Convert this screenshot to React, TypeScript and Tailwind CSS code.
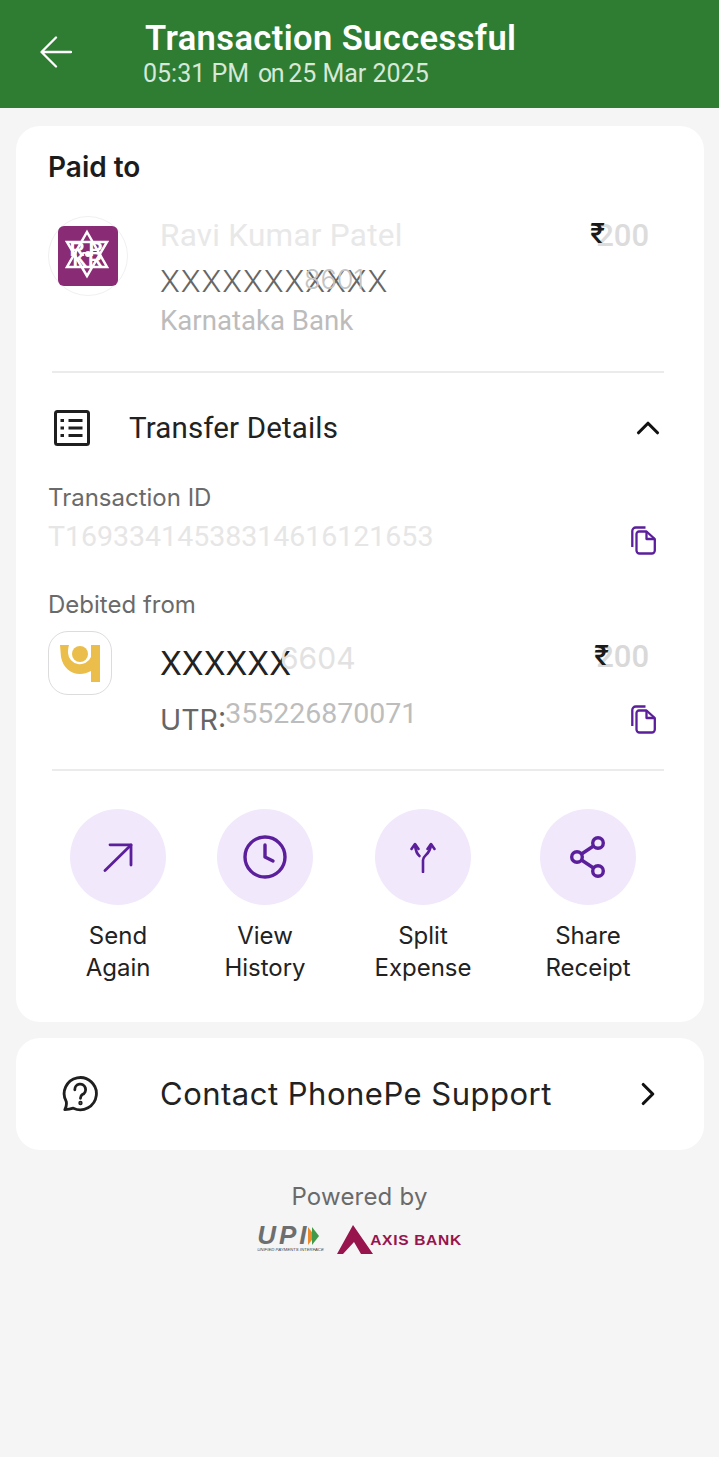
import React from 'react';
import { ChevronRight, ChevronUp, Clock } from 'lucide-react';

const inter = "font-['Inter',sans-serif]";
const roboto = "font-['Roboto',sans-serif]";

const CopyIcon = () => (
  <svg width="25" height="29" viewBox="0 0 25 29" fill="none" stroke="#5b1f9b" strokeWidth="2.300" strokeLinejoin="round">
    <path d="M5.500 8 A2.500 2.500 0 0 1 8 5.500 H15.500 L23.800 13 V24.500 A3 3 0 0 1 20.800 27.500 H8.500 A3 3 0 0 1 5.500 24.500 Z" />
    <path d="M15.500 5.500 V13 H23.800" />
    <path d="M1.300 21 V5 A3.500 3.500 0 0 1 4.800 1.500 H14.500" />
  </svg>
);

const ListIcon = () => (
  <svg width="36" height="36" viewBox="0 0 36 36" fill="none" stroke="#1f1f1f" strokeWidth="3">
    <rect x="1.500" y="1.500" width="33" height="33" rx="2" />
    <path d="M14.500 10.500 H28.500 M14.500 18 H28.500 M14.500 25.500 H28.500" />
    <path d="M6.500 10.500 H10 M6.500 18 H10 M6.500 25.500 H10" />
  </svg>
);

const ArrowIcon = () => (
  <svg width="30" height="29" viewBox="0 0 30 29" fill="none" stroke="#5b1f9b" strokeWidth="2.800" strokeLinecap="round" strokeLinejoin="round">
    <path d="M2 27.500 L28 2" />
    <path d="M7 1.800 H28 V22" />
  </svg>
);

const SplitIcon = () => (
  <svg width="26" height="31" viewBox="0 0 26 31" fill="none" stroke="#5b1f9b" strokeWidth="2.600" strokeLinecap="round" strokeLinejoin="round">
    <path d="M13 30 V18 C13 13 20 13 21 3" />
    <path d="M9.500 14 C7 12 5.500 8 5 3" />
    <path d="M1.500 7 L5 2 L8.500 7" />
    <path d="M17.500 7 L21 2 L24.500 7" />
  </svg>
);

const ShareIcon = () => (
  <svg width="36" height="42" viewBox="0 0 36 42" fill="none" stroke="#5b1f9b" strokeWidth="3.400">
    <circle cx="28" cy="7" r="5.300" />
    <circle cx="7" cy="21" r="5.300" />
    <circle cx="28" cy="35" r="5.300" />
    <path d="M11.500 18 L23.500 10 M11.500 24 L23.500 32" />
  </svg>
);

const SupportIcon = () => (
  <svg width="36" height="36" viewBox="0 0 38 38" fill="none" stroke="#1f1f1f" strokeWidth="3" strokeLinejoin="round" strokeLinecap="round">
    <path d="M3 35.500 C5 32 5 30 4.500 27 A17 17 0 1 1 12 34 C9 35 6 35.500 3 35.500 Z" />
    <path d="M13.500 14.500 A5.700 5.700 0 1 1 21.500 19.500 C20 20.500 19.500 21.500 19.500 23.500" />
    <circle cx="19.500" cy="28.500" r="0.800" fill="#1f1f1f" />
  </svg>
);

const KarnatakaLogo = () => (
  <svg width="80" height="80" viewBox="0 0 80 80">
    <circle cx="40" cy="40" r="39.500" fill="#fff" stroke="#f0f0f0" strokeWidth="1" />
    <rect x="10" y="10" width="60" height="60" rx="6" fill="#8a2b76" />
    <path d="M39 16 L59 51 H19 Z M39 60 L19 26 H59 Z" fill="none" stroke="#fff" strokeWidth="2.500" />
    <text x="40" y="40" textAnchor="middle" fontFamily="Liberation Sans, sans-serif" fontWeight="700" fontSize="21" letterSpacing="4" fill="#fff">RP</text>
    <text x="40" y="50" textAnchor="middle" fontFamily="Liberation Sans, sans-serif" fontWeight="700" fontSize="20" letterSpacing="1" fill="#fff">KR</text>
    <circle cx="40" cy="38" r="3" fill="#fff" />
  </svg>
);

const PnbLogo = () => (
  <div className="flex h-16 w-16 items-center justify-center rounded-[20px] border border-[#dcdcdc] bg-white pb-[1px]">
    <svg width="40" height="39" viewBox="0 0 40 39">
      <path d="M0 2 H9 C8 5 8 8 8 10 A12 12 0 0 0 31 14 V2 H40 V39 H31 V28 C27 30 24 31 20 31 C10 31 3 24 1 14 Z" fill="#ebbd4a" />
      <circle cx="20" cy="11" r="8" fill="#ebbd4a" />
    </svg>
  </div>
);

const PartnerLogos = () => (
  <div className="mt-[12px] flex items-start justify-center gap-[10px]">
    <div className="flex h-[29px] w-[70px] flex-col items-start">
      <div className="flex items-center">
        <span className="font-['Liberation_Sans',sans-serif] text-[26px] leading-[21px] font-bold tracking-[3px] text-[#6d6e70] italic">UPI</span>
        <svg width="12" height="18" viewBox="0 0 12 18" className="-ml-[3px]">
          <path d="M1 0 L8 9 L1 18 Z" fill="#ef8a2b" />
          <path d="M5 0 L12 9 L5 18 Z" fill="#3f9b49" />
        </svg>
      </div>
      <span className="font-['Liberation_Sans',sans-serif] text-[4.300px] leading-[7px] whitespace-nowrap text-[#444] italic">UNIFIED PAYMENTS INTERFACE</span>
    </div>
    <div className="flex items-center">
      <svg width="36" height="29" viewBox="0 0 36 29">
        <path d="M16 0 L36 29 H24 L17 17 L6 29 H0 Z" fill="#97144d" />
      </svg>
      <span className="-ml-[3px] font-['Liberation_Sans',sans-serif] text-[15.500px] font-bold tracking-[0.7px] whitespace-nowrap text-[#97144d]">AXIS BANK</span>
    </div>
  </div>
);

const ACTIONS = [
  { line1: 'Send', line2: 'Again', width: 'w-[147px]', icon: <ArrowIcon /> },
  { line1: 'View', line2: 'History', width: 'w-[158px]', icon: <Clock size={48} strokeWidth={1.700} color="#5b1f9b" /> },
  { line1: 'Split', line2: 'Expense', width: 'w-[165px]', icon: <SplitIcon /> },
  { line1: 'Share', line2: 'Receipt', width: 'w-[96px]', icon: <ShareIcon /> },
];

export default function App() {
  return (
    <div className={`min-h-[1457px] bg-[#f5f5f5] ${inter}`}>
      <header className="flex h-[108px] bg-[#2e7d32]">
        <div className="flex w-[145px] items-center pb-[4px] pl-[40px]">
          <svg width="32" height="32" viewBox="0 0 32 32" fill="none" stroke="#fff" strokeWidth="2.300" strokeLinecap="round" strokeLinejoin="round">
            <path d="M31 16 H2 M16 1.500 L1.500 16 L16 30.500" />
          </svg>
        </div>
        <div className={`${roboto} pt-[17px]`}>
          <div className="text-[34.500px] leading-[42px] font-semibold tracking-[0.4px] whitespace-nowrap text-white">Transaction Successful</div>
          <div className="-ml-[2px] flex text-[25px] leading-[30px] whitespace-nowrap text-[#d7e8d8]">
            <span>05:31 PM</span>
            <span className="ml-[9px] tracking-[-1.500px]">on</span>
            <span className="ml-[5px]">25 Mar 2025</span>
          </div>
        </div>
      </header>

      <div className="pt-[18px] pr-[15px] pl-4">
        <section className="h-[896px] rounded-[24px] bg-white">
          <div className="px-8 pt-[23px] text-[28px] leading-[36px] font-semibold text-[#1c1c1c]">Paid to</div>

          <div className="flex px-8 pt-[31px]">
            <KarnatakaLogo />
            <div className="ml-8 flex-1">
              <div className="mt-[1px] flex items-center justify-between pr-[23px]">
                <span className={`${roboto} text-[31.500px] leading-[38px] tracking-[0.25px] text-[#e8e8e8]`}>Ravi Kumar Patel</span>
                <span className={`${roboto} relative text-[31px] leading-[38px] font-medium text-[#dcdcdc]`}>
                  <span className="absolute top-[-2px] -left-[6px] text-[28px] text-[#1a1a1a]">₹</span>
                  200
                </span>
              </div>
              <div className="relative mt-[6px] text-[30px] leading-[40px] font-light tracking-[0.9px] text-[#666]">
                XXXXXXXXXXX
                <span className="absolute top-[-1px] left-[144px] text-[27px] tracking-normal text-[#c4c4c4]">8601</span>
              </div>
              <div className={`${roboto} text-[27.600px] leading-[40px] text-[#bcbcbc]`}>Karnataka Bank</div>
            </div>
          </div>

          <div className="mt-[30px] mr-[40px] ml-[36px] h-[2px] bg-[#ebebeb]" />

          <div className="flex h-[110px] items-center pr-[37px] pl-[38px]">
            <ListIcon />
            <span className={`${roboto} ml-[39px] flex-1 text-[29.500px] tracking-[0.15px] text-[#222]`}>Transfer Details</span>
            <ChevronUp size={38} strokeWidth={2} color="#111" />
          </div>

          <div className="px-8">
            <div className="text-[24px] leading-[30px] text-[#6a6a6a]">Transaction ID</div>
            <div className="flex justify-between pr-[16px]">
              <span className={`${roboto} mt-[6px] text-[28.500px] leading-[36px] text-[#e6e6e6]`}>T16933414538314616121653</span>
              <span className="mt-[13px]"><CopyIcon /></span>
            </div>
            <div className="mt-[35px] text-[24px] leading-[30px] text-[#6a6a6a]">Debited from</div>

            <div className="mt-[11px] flex">
              <PnbLogo />
              <div className="ml-12 flex-1">
                <div className="relative flex h-[60px] items-start justify-between pr-[23px]">
                  <span className="relative top-[12px] text-[32px] leading-[42px] text-[#222]">XXXXXX</span>
                  <span className="absolute top-[8px] left-[120px] text-[30px] leading-[38px] text-[#e2e2e2]">6604</span>
                  <span className={`${roboto} relative mt-[7px] text-[31px] leading-[38px] font-medium text-[#d9d9d9]`}>
                    <span className="absolute top-[-1px] -left-[2px] text-[28px] text-[#1a1a1a]">₹</span>
                    200
                  </span>
                </div>
                <div className="flex items-start justify-between pr-[16px]">
                  <div className="flex items-start">
                    <span className="mt-[10px] text-[28.500px] leading-[38px] text-[#666]">UTR:</span>
                    <span className={`${roboto} mt-[7px] -ml-[1px] text-[28.500px] leading-[32px] text-[#bdbdbd]`}>355226870071</span>
                  </div>
                  <span className="mt-[14px]"><CopyIcon /></span>
                </div>
              </div>
            </div>
          </div>

          <div className="mt-[30px] mr-[40px] ml-[36px] h-[2px] bg-[#ebebeb]" />

          <div className="flex pt-[38px] pl-[54px]">
            {ACTIONS.map((a) => (
              <div key={a.line1} className={`${a.width} shrink-0`}>
                <div className="flex w-24 flex-col items-center">
                  <div className="flex h-24 w-24 items-center justify-center rounded-full bg-[#f1e8fb]">{a.icon}</div>
                  <div className="mt-[15px] text-center text-[24px] leading-[32px] whitespace-nowrap text-[#222]">
                    <div>{a.line1}</div>
                    <div>{a.line2}</div>
                  </div>
                </div>
              </div>
            ))}
          </div>
        </section>

        <section className="mt-4 flex h-[112px] items-center rounded-[24px] bg-white pr-[37px] pl-[46px]">
          <SupportIcon />
          <span className="ml-[62px] flex-1 text-[31px] tracking-[0.5px] text-[#222]">Contact PhonePe Support</span>
          <ChevronRight size={38} strokeWidth={2} color="#111" />
        </section>
      </div>

      <div className="mt-[31px] text-center text-[24px] leading-[32px] tracking-[0.2px] text-[#6a6a6a]">Powered by</div>
      <PartnerLogos />
    </div>
  );
}
